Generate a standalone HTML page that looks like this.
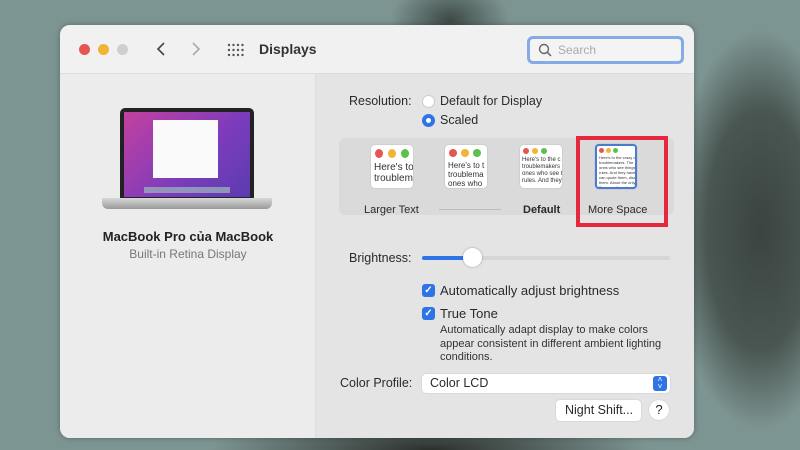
<!DOCTYPE html>
<html><head><meta charset="utf-8"><style>
*{box-sizing:border-box;margin:0;padding:0}
body{width:800px;height:450px;overflow:hidden;position:relative;font-family:"Liberation Sans",sans-serif;
background:radial-gradient(ellipse 90px 200px at 760px 230px,#3a4440 0%,#4a5652 60%,rgba(120,140,137,0) 100%),
radial-gradient(ellipse 60px 40px at 450px 20px,#3e4a47 0%,rgba(120,140,137,0) 100%),
radial-gradient(ellipse 220px 40px at 430px 450px,#2b2f2c 0%,rgba(120,140,137,0) 100%),
#7d9592;}
.win{position:absolute;left:60px;top:25px;width:634px;height:413px;border-radius:10px;overflow:hidden;background:#e9e9e9;box-shadow:0 0 6px rgba(0,0,0,.3)}
.title{position:absolute;left:0;top:0;width:100%;height:49px;background:#f1f1f1;border-bottom:1px solid #dcdcdc}
.dot{position:absolute;top:19px;width:11px;height:11px;border-radius:50%}
.side{position:absolute;left:0;top:49px;width:256px;height:364px;background:#ececec;border-right:1px solid #ddd}
.main{position:absolute;left:256px;top:49px;width:378px;height:364px;background:#e4e4e4}
.t{position:absolute;font-size:12.5px;color:#2a2a2a;white-space:nowrap}
.thumb{position:absolute;width:42px;height:43px;background:#fff;border-radius:4px;overflow:hidden;box-shadow:0 0 1px rgba(0,0,0,.3)}
.cb{position:absolute;width:13px;height:13px;border-radius:3px;background:#2f74e6;color:#fff;font-size:10px;line-height:13px;text-align:center;font-weight:bold}
</style></head><body>
<div class="win">
 <div class="title">
  <div class="dot" style="left:19px;background:#e65650"></div>
  <div class="dot" style="left:38px;background:#f1b434"></div>
  <div class="dot" style="left:57px;background:#cfcfcf"></div>
  <svg style="position:absolute;left:95px;top:16px" width="12" height="16"><path d="M9 2 L3 8 L9 14" stroke="#444" stroke-width="1.6" fill="none"/></svg>
  <svg style="position:absolute;left:130px;top:16px" width="12" height="16"><path d="M3 2 L9 8 L3 14" stroke="#aaa" stroke-width="1.6" fill="none"/></svg>
  <svg style="position:absolute;left:167px;top:18px" width="18" height="14"><g fill="#555"><circle cx="2" cy="2" r="1.2"/><circle cx="6.5" cy="2" r="1.2"/><circle cx="11" cy="2" r="1.2"/><circle cx="15.5" cy="2" r="1.2"/><circle cx="2" cy="7" r="1.2"/><circle cx="6.5" cy="7" r="1.2"/><circle cx="11" cy="7" r="1.2"/><circle cx="15.5" cy="7" r="1.2"/><circle cx="2" cy="12" r="1.2"/><circle cx="6.5" cy="12" r="1.2"/><circle cx="11" cy="12" r="1.2"/><circle cx="15.5" cy="12" r="1.2"/></g></svg>
  <div class="t" style="left:199px;top:16px;font-size:14px;font-weight:bold;color:#333">Displays</div>
  <div style="position:absolute;left:467px;top:11px;width:157px;height:28px;border:3px solid #86a9e8;border-radius:6px;background:#f4f4f4"></div>
  <svg style="position:absolute;left:478px;top:18px" width="14" height="14"><circle cx="6" cy="6" r="4.5" stroke="#666" stroke-width="1.4" fill="none"/><path d="M9.3 9.3 L13 13" stroke="#666" stroke-width="1.5"/></svg>
  <div class="t" style="left:498px;top:18px;color:#aaa;font-size:12px">Search</div>
 </div>
 <div class="side">
  <div style="position:absolute;left:60px;top:34px;width:134px;height:91px;background:#222;border-radius:5px 5px 0 0"></div>
  <div style="position:absolute;left:64px;top:38px;width:126px;height:85px;background:linear-gradient(135deg,#c4409f,#7a3cbc 60%,#5b3bb0)"></div>
  <div style="position:absolute;left:93px;top:46px;width:65px;height:58px;background:#fafafa"></div>
  <div style="position:absolute;left:84px;top:113px;width:86px;height:6px;background:#9ab;opacity:.8"></div>
  <div style="position:absolute;left:42px;top:124px;width:170px;height:11px;background:linear-gradient(#d8d8d8,#999);border-radius:0 0 6px 6px"></div>
  <div class="t" style="left:0;width:256px;text-align:center;top:155px;font-weight:bold;font-size:13px;color:#222">MacBook Pro của MacBook</div>
  <div class="t" style="left:0;width:256px;text-align:center;top:173px;font-size:12px;color:#777">Built-in Retina Display</div>
 </div>
 <div class="main">
  <div class="t" style="left:33px;top:20px">Resolution:</div>
  <div style="position:absolute;left:106px;top:21px;width:13px;height:13px;border-radius:50%;background:#fff;border:1px solid #ccc"></div>
  <div class="t" style="left:124px;top:20px">Default for Display</div>
  <div style="position:absolute;left:106px;top:40px;width:13px;height:13px;border-radius:50%;background:#fff;border:4px solid #2f74e6"></div>
  <div class="t" style="left:124px;top:39px">Scaled</div>
  <div style="position:absolute;left:23px;top:64px;width:335px;height:77px;background:#dadada;border-radius:6px"></div>
  <div class="thumb" style="left:55px;top:71px"><div style="display:flex;gap:5px;padding:4px"><i style="width:9px;height:9px;border-radius:50%;background:#e65650"></i><i style="width:9px;height:9px;border-radius:50%;background:#f1b434"></i><i style="width:9px;height:9px;border-radius:50%;background:#5cbf4e"></i></div><div style="font-size:10px;padding-left:3px;line-height:11px;color:#333;width:80px">Here's to<br>troublem</div></div>
  <div class="thumb" style="left:129px;top:71px"><div style="display:flex;gap:4px;padding:4px"><i style="width:8px;height:8px;border-radius:50%;background:#e65650"></i><i style="width:8px;height:8px;border-radius:50%;background:#f1b434"></i><i style="width:8px;height:8px;border-radius:50%;background:#5cbf4e"></i></div><div style="font-size:8px;padding-left:3px;line-height:9px;color:#333;width:80px">Here's to t<br>troublema<br>ones who</div></div>
  <div class="thumb" style="left:204px;top:71px"><div style="display:flex;gap:3px;padding:3px"><i style="width:6px;height:6px;border-radius:50%;background:#e65650"></i><i style="width:6px;height:6px;border-radius:50%;background:#f1b434"></i><i style="width:6px;height:6px;border-radius:50%;background:#5cbf4e"></i></div><div style="font-size:6px;padding-left:2px;line-height:7px;color:#333;width:80px">Here's to the c<br>troublemakers<br>ones who see t<br>rules. And they</div></div>
  <div class="thumb" style="left:279px;top:70px;border:2px solid #4a7bd0;height:45px"><div style="display:flex;gap:2px;padding:2px"><i style="width:5px;height:5px;border-radius:50%;background:#e65650"></i><i style="width:5px;height:5px;border-radius:50%;background:#f1b434"></i><i style="width:5px;height:5px;border-radius:50%;background:#5cbf4e"></i></div><div style="font-size:4px;padding-left:2px;line-height:5px;color:#333;width:80px">Here's to the crazy one<br>troublemakers. The<br>ones who see things<br>rules. And they have<br>can quote them, disag<br>them. About the only<br>Because they change</div></div>
  <div class="t" style="left:48px;top:130px;font-size:11px">Larger Text</div>
  <div style="position:absolute;left:123px;top:135px;width:62px;height:1px;background:#bbb"></div>
  <div class="t" style="left:207px;top:130px;font-size:11px;font-weight:bold">Default</div>
  <div class="t" style="left:272px;top:130px;font-size:11px">More Space</div>
  <div style="position:absolute;left:260px;top:62px;width:92px;height:91px;border:4px solid #e5283e"></div>
  <div class="t" style="left:33px;top:177px">Brightness:</div>
  <div style="position:absolute;left:106px;top:182px;width:248px;height:4px;border-radius:2px;background:#d6d6d6"></div>
  <div style="position:absolute;left:106px;top:182px;width:50px;height:4px;border-radius:2px;background:#2f74e6"></div>
  <div style="position:absolute;left:147px;top:174px;width:19px;height:19px;border-radius:50%;background:#fff;box-shadow:0 0 2px rgba(0,0,0,.35)"></div>
  <div class="cb" style="left:106px;top:210px">✓</div>
  <div class="t" style="left:124px;top:209px;font-size:13px">Automatically adjust brightness</div>
  <div class="cb" style="left:106px;top:233px">✓</div>
  <div class="t" style="left:124px;top:232px;font-size:13px">True Tone</div>
  <div class="t" style="left:124px;top:250px;font-size:11px;line-height:13.5px;color:#333">Automatically adapt display to make colors<br>appear consistent in different ambient lighting<br>conditions.</div>
  <div class="t" style="left:24px;top:302px">Color Profile:</div>
  <div style="position:absolute;left:106px;top:300px;width:248px;height:19px;background:#fff;border-radius:4px;box-shadow:0 0 1px rgba(0,0,0,.3)"></div>
  <div class="t" style="left:114px;top:302px">Color LCD</div>
  <div style="position:absolute;left:337px;top:302px;width:14px;height:15px;border-radius:3px;background:#2f74e6;color:#fff;font-size:8px;line-height:7px;text-align:center">˄<br>˅</div>
  <div style="position:absolute;left:240px;top:326px;width:85px;height:21px;background:#fff;border-radius:4px;box-shadow:0 0 1px rgba(0,0,0,.3)"></div>
  <div class="t" style="left:249px;top:329px">Night Shift...</div>
  <div style="position:absolute;left:333px;top:326px;width:20px;height:20px;border-radius:50%;background:#fff;box-shadow:0 0 1px rgba(0,0,0,.3);text-align:center;font-size:13px;line-height:20px;color:#222">?</div>
 </div>
</div>
</body></html>
